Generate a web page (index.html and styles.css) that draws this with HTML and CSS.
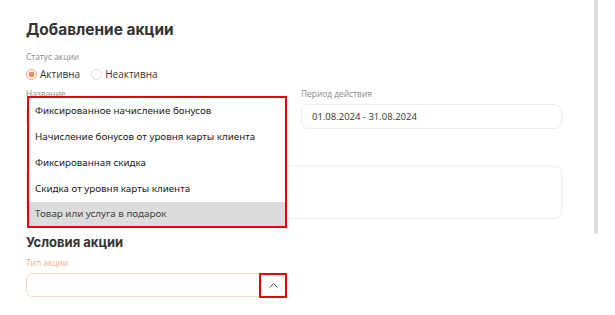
FILE: index.html
```html
<html lang="ru">
<head>
    <meta charset="UTF-8">
    <title>Добавление акции</title>
    <link rel="stylesheet" href="styles.css">
</head>
<body>

    <div class="page">
        <h1 class="title">Добавление акции</h1>

        <!-- Статус -->
        <div class="field status">
            <div class="label">Статус акции</div>
            <div class="radios">
                <label class="radio"><span class="dot checked"></span>Активна</label>
                <label class="radio"><span class="dot"></span>Неактивна</label>
            </div>
        </div>

        <!-- Название и период -->
        <div class="row">
            <div class="field col">
                <div class="label">Название</div>
                <div class="input"></div>

                <!-- Открытый список типов -->
                <ul class="options">
                    <li>Фиксированное начисление бонусов</li>
                    <li>Начисление бонусов от уровня карты клиента</li>
                    <li>Фиксированная скидка</li>
                    <li>Скидка от уровня карты клиента</li>
                    <li class="hover">Товар или услуга в подарок</li>
                </ul>
            </div>
            <div class="field col">
                <div class="label">Период действия</div>
                <div class="input">01.08.2024 - 31.08.2024</div>
            </div>
        </div>

        <div class="textarea"></div>

        <h2 class="subtitle">Условия акции</h2>

        <div class="field col">
            <div class="label accent">Тип акции</div>
            <div class="input select">
                <span class="arrow">
                    <svg width="11" height="7" viewBox="0 0 11 7"><path d="M1.5 5.5 L5.5 1.5 L9.5 5.5" fill="none" stroke="#555" stroke-width="1"/></svg>
                </span>
            </div>
        </div>
    </div>

    <div class="scrollbar"></div>

</body>
</html>
```

FILE: styles.css
```css
/* Base */
body {
    margin: 0;
    font-family: "Open Sans", "Noto Sans", sans-serif;
    color: #333;
    background: #fff;
    position: relative;
    width: 615px;
    height: 315px;
    overflow: hidden;
}

.page {
    width: 536px;
    padding: 20px 0 0 26px;
}

.title {
    font-family: Inter, "Noto Sans", sans-serif;
    font-size: 15.4px;
    font-weight: 700;
    line-height: 20px;
    margin: 0 0 11px;
    color: #333;
}

.subtitle {
    font-family: Inter, "Noto Sans", sans-serif;
    font-size: 13px;
    font-weight: 700;
    line-height: 16px;
    margin: 15px 0 7px;
    color: #333;
}

/* Fields */
.field {
    position: relative;
}

.status {
    margin-bottom: 7px;
}

.label {
    font-size: 8.4px;
    line-height: 12px;
    color: #888;
    margin-bottom: 4px;
}

.label.accent {
    color: #f2ab8a;
}

.row {
    display: flex;
    gap: 14px;
    margin-bottom: 37px;
}

.col {
    width: 261px;
}

.input {
    box-sizing: border-box;
    height: 25px;
    border: 1px solid #ececec;
    border-radius: 7px;
    padding: 0 10px;
    font-size: 9.5px;
    line-height: 23px;
    color: #333;
}

.textarea {
    box-sizing: border-box;
    height: 53px;
    border: 1px solid #ececec;
    border-radius: 7px;
}

/* Radios */
.radios {
    display: flex;
    gap: 11px;
}

.radio {
    display: flex;
    align-items: center;
    gap: 3px;
    font-size: 10px;
    line-height: 14px;
    color: #333;
}

.dot {
    box-sizing: border-box;
    width: 11px;
    height: 11px;
    border-radius: 50%;
    border: 1px solid #ddd;
}

.dot.checked {
    border-color: #f3a07c;
    background: radial-gradient(circle, #f08a5d 0 2.6px, #fff 3.2px);
}

/* Select */
.select {
    position: relative;
    height: 24px;
    border-color: #f3d8c8;
}

.arrow {
    position: absolute;
    right: -1px;
    top: -1px;
    box-sizing: border-box;
    width: 28px;
    height: 25px;
    border: 2px solid #e00;
    display: flex;
    align-items: center;
    justify-content: center;
    background: #fff;
}

/* Dropdown list */
.options {
    position: absolute;
    left: 1px;
    top: 8px;
    box-sizing: border-box;
    width: 260px;
    margin: 0;
    padding: 0;
    list-style: none;
    background: #fff;
    border: 2px solid #e8000b;
    font-family: "Noto Sans", "Open Sans", sans-serif;
    font-size: 9.8px;
    color: #1a1a1a;
    z-index: 2;
}

.options li {
    height: 26px;
    line-height: 26px;
    padding-left: 6px;
}

.options li.hover {
    background: #dcdcdc;
    color: #444;
    height: 24px;
    line-height: 24px;
}

/* Scrollbar */
.scrollbar {
    position: absolute;
    left: 594px;
    top: 0;
    width: 4px;
    height: 234px;
    background: #dcdcdc;
    border-radius: 0 0 3px 3px;
}
```
